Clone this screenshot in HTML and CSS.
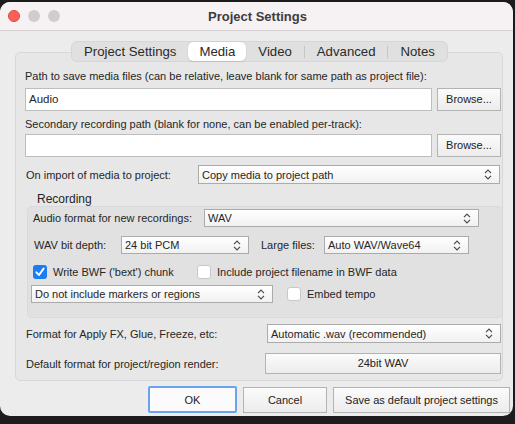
FILE: index.html
```html
<!DOCTYPE html>
<html>
<head>
<meta charset="utf-8">
<link rel="stylesheet" href="styles.css">
</head>
<body>
<div class="window">
  <div class="titlebar">
    <div class="lights">
      <span class="light red"></span>
      <span class="light grey"></span>
      <span class="light grey"></span>
    </div>
    <div class="title">Project Settings</div>
    <div></div>
  </div>
  <div class="body">
    <div class="tabs">
      <span class="tab">Project Settings</span>
      <span class="tab active">Media</span>
      <span class="tab">Video</span>
      <span class="sep"></span>
      <span class="tab">Advanced</span>
      <span class="sep"></span>
      <span class="tab">Notes</span>
    </div>
    <div class="panel">
      <div class="label lbl-path">Path to save media files (can be relative, leave blank for same path as project file):</div>
      <div class="row">
        <div class="input">Audio</div>
        <div class="btn browse">Browse...</div>
      </div>
      <div class="label lbl-sec">Secondary recording path (blank for none, can be enabled per-track):</div>
      <div class="row row-sec">
        <div class="input"></div>
        <div class="btn browse">Browse...</div>
      </div>
      <div class="row row-import">
        <span class="label lbl-import">On import of media to project:</span>
        <div class="select sel-import"><span>Copy media to project path</span><svg class="chev" width="8" height="11" viewBox="0 0 8 11"><path d="M1 4.2 L4 1.2 L7 4.2 M1 6.8 L4 9.8 L7 6.8" fill="none" stroke="#4a4a4a" stroke-width="1.2"/></svg></div>
      </div>
      <div class="group-title">Recording</div>
      <div class="group">
        <div class="row g-row1">
          <span class="label lbl-fmt">Audio format for new recordings:</span>
          <div class="select sel-fmt"><span>WAV</span><svg class="chev" width="8" height="11" viewBox="0 0 8 11"><path d="M1 4.2 L4 1.2 L7 4.2 M1 6.8 L4 9.8 L7 6.8" fill="none" stroke="#4a4a4a" stroke-width="1.2"/></svg></div>
        </div>
        <div class="row g-row2">
          <span class="label lbl-depth">WAV bit depth:</span>
          <div class="select sel-depth"><span>24 bit PCM</span><svg class="chev" width="8" height="11" viewBox="0 0 8 11"><path d="M1 4.2 L4 1.2 L7 4.2 M1 6.8 L4 9.8 L7 6.8" fill="none" stroke="#4a4a4a" stroke-width="1.2"/></svg></div>
          <span class="label lbl-large">Large files:</span>
          <div class="select sel-large"><span>Auto WAV/Wave64</span><svg class="chev" width="8" height="11" viewBox="0 0 8 11"><path d="M1 4.2 L4 1.2 L7 4.2 M1 6.8 L4 9.8 L7 6.8" fill="none" stroke="#4a4a4a" stroke-width="1.2"/></svg></div>
        </div>
        <div class="row g-row3">
          <span class="check checked"><svg width="14" height="14" viewBox="0 0 14 14"><path d="M3.4 7.3 L6 10 L10.6 3.6" fill="none" stroke="#fff" stroke-width="1.9" stroke-linecap="round" stroke-linejoin="round"/></svg></span>
          <span class="label cb-bwf">Write BWF ('bext') chunk</span>
          <span class="check"></span>
          <span class="label">Include project filename in BWF data</span>
        </div>
        <div class="row g-row4">
          <div class="select sel-markers"><span>Do not include markers or regions</span><svg class="chev" width="8" height="11" viewBox="0 0 8 11"><path d="M1 4.2 L4 1.2 L7 4.2 M1 6.8 L4 9.8 L7 6.8" fill="none" stroke="#4a4a4a" stroke-width="1.2"/></svg></div>
          <span class="check cb-tempo"></span>
          <span class="label">Embed tempo</span>
        </div>
      </div>
      <div class="row row-apply">
        <span class="label">Format for Apply FX, Glue, Freeze, etc:</span>
        <div class="select sel-apply"><span>Automatic .wav (recommended)</span><svg class="chev" width="8" height="11" viewBox="0 0 8 11"><path d="M1 4.2 L4 1.2 L7 4.2 M1 6.8 L4 9.8 L7 6.8" fill="none" stroke="#4a4a4a" stroke-width="1.2"/></svg></div>
      </div>
      <div class="row row-render">
        <span class="label">Default format for project/region render:</span>
        <div class="btn btn-render">24bit WAV</div>
      </div>
    </div>
  </div>
  <div class="footer">
    <div class="btn btn-ok">OK</div>
    <div class="btn btn-cancel">Cancel</div>
    <div class="btn btn-save">Save as default project settings</div>
  </div>
</div>
</body>
</html>
```
FILE: styles.css
```css
* { box-sizing: border-box; }
html, body {
  margin: 0;
  padding: 0;
}
body {
  width: 515px;
  height: 424px;
  overflow: hidden;
  background: #1c1c1e;
  font-family: "Liberation Sans", Arial, sans-serif;
  font-size: 11px;
  color: #262626;
}
.window {
  margin-top: 2px;
  width: 513px;
  height: 414px;
  border-radius: 10px;
  background: #ececec;
  overflow: hidden;
  display: flex;
  flex-direction: column;
}
.titlebar {
  height: 29px;
  flex: none;
  background: #f6f2f3;
  border-bottom: 1px solid #d5d1d2;
  display: grid;
  grid-template-columns: 1fr auto 1fr;
  align-items: center;
}
.lights {
  display: flex;
  gap: 8px;
  padding-left: 8px;
}
.light {
  width: 12px;
  height: 12px;
  border-radius: 50%;
  background: #d1cdce;
}
.light.red {
  background: #fe5f57;
  border: 0.5px solid #e2463f;
}
.title {
  font-size: 13px;
  font-weight: bold;
  color: #3e3c3d;
  padding-left: 2px;
}
.body {
  padding: 10px 0 0 15px;
  display: flex;
  flex-direction: column;
  width: 503px;
}
.tabs {
  align-self: center;
  margin-left: 1px;
  height: 21px;
  display: flex;
  align-items: center;
  background: #e0e0e0;
  border: 1px solid #d6d6d6;
  border-radius: 6px;
  margin-bottom: -10px;
  position: relative;
  z-index: 1;
  font-size: 13.2px;
  color: #2a2a2a;
}
.tab {
  padding: 0 12px;
  line-height: 19px;
}
.tab.active {
  background: #ffffff;
  border-radius: 5px;
  height: 19px;
  padding: 0 11px;
  box-shadow: 0 0 1px rgba(0,0,0,0.25), 0 1px 1px rgba(0,0,0,0.08);
}
.sep {
  width: 1px;
  height: 12px;
  background: #c6c6c6;
}
.panel {
  width: 488px;
  border: 1px solid #d8d8d8;
  border-radius: 5px;
  background: #e7e7e7;
  padding: 16px 0 6px 9px;
  display: flex;
  flex-direction: column;
}
.label {
  line-height: 14px;
  white-space: nowrap;
}
.row {
  display: flex;
  align-items: center;
}
.lbl-path { margin-bottom: 5px; }
.lbl-sec { margin-top: 6px; margin-bottom: 3px; }
.input {
  width: 407px;
  height: 23px;
  background: #fff;
  border: 1px solid #bdbdbd;
  padding: 0 3px;
  line-height: 21px;
  font-size: 11.5px;
}
.btn {
  border: 1px solid #b3b3b3;
  background: linear-gradient(#fbfbfb, #ececec);
  text-align: center;
  white-space: nowrap;
  color: #222;
}
.browse {
  margin-left: 5px;
  width: 64px;
  height: 23px;
  line-height: 21px;
}
.row-import {
  margin-top: 8px;
}
.lbl-import {
  padding-left: 1px;
  width: 173px;
}
.select {
  height: 19px;
  border: 1px solid #ababab;
  background: linear-gradient(#ffffff, #f1f1f1);
  display: flex;
  align-items: center;
  justify-content: space-between;
  padding: 0 7px 0 3px;
  white-space: nowrap;
}
.chev { flex: none; }
.sel-import { width: 302px; }
.group-title {
  margin-top: 8px;
  padding-left: 12px;
  font-size: 12px;
  line-height: 14px;
}
.group {
  margin-left: 2px;
  width: 476px;
  height: 112px;
  border: 1px solid #d9d9d9;
  border-radius: 5px;
  background: #e1e1e1;
  padding: 2px 0 0 5px;
  display: flex;
  flex-direction: column;
}
.g-row1 .select { height: 18px; }
.lbl-fmt { width: 171px; }
.sel-fmt { width: 275px; }
.g-row2 { margin-top: 9px; }
.g-row2 .select { height: 18px; }
.lbl-depth { width: 88px; padding-left: 1px; }
.sel-depth { width: 128px; }
.lbl-large { margin-left: 12px; width: 63px; }
.sel-large { width: 145px; }
.g-row3 { margin-top: 11px; }
.check {
  width: 14px;
  height: 14px;
  border-radius: 3px;
  background: #fff;
  border: 1px solid #c8c8c8;
  flex: none;
  display: flex;
}
.check.checked {
  background: #1c7cf4;
  border: none;
}
.cb-bwf {
  margin-left: 6px;
  width: 144px;
}
.check + .label { margin-left: 6px; }
.g-row4 { margin-top: 6px; margin-left: -2px; }
.sel-markers { width: 242px; height: 18px; }
.cb-tempo { margin-left: 14px; }
.row-apply {
  margin-top: 6px;
  padding-left: 1px;
  justify-content: space-between;
  padding-right: 1px;
}
.sel-apply { width: 234px; }
.row-render {
  margin-top: 10px;
  padding-left: 1px;
  justify-content: space-between;
  padding-right: 1px;
}
.btn-render {
  width: 236px;
  height: 21px;
  line-height: 19px;
}
.footer {
  display: flex;
  justify-content: flex-end;
  gap: 6px;
  padding: 5px 3px 0 0;
  align-items: center;
}
.footer .btn {
  height: 26px;
  line-height: 24px;
  font-size: 11px;
}
.btn-ok {
  width: 89px;
  border: 2px solid #6aa3f2 !important;
  background: #fbfbfb;
  height: 27px !important;
  border-radius: 2px;
}
.btn-cancel { width: 84px; }
.btn-save { width: 177px; }
```
